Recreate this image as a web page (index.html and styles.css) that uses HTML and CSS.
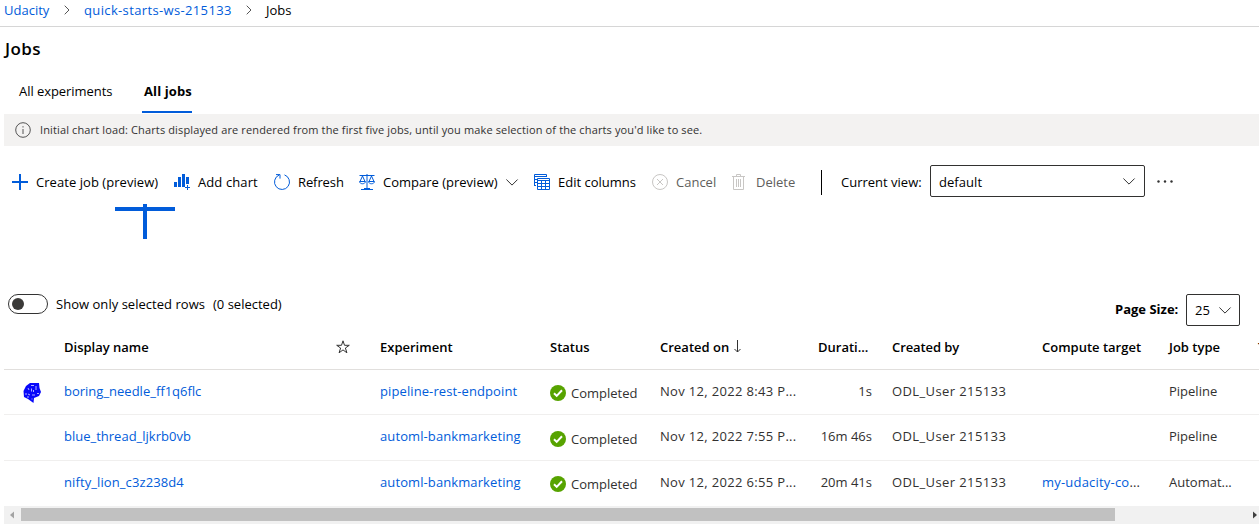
FILE: index.html
```html
<!DOCTYPE html>
<html lang="en">
<head>
<meta charset="utf-8">
<title>Jobs</title>
<link rel="stylesheet" href="styles.css">
</head>
<body>
<nav class="breadcrumb">
  <a class="bc-root">Udacity</a>
  <svg class="sep" width="6" height="10" viewBox="0 0 6 10"><path d="M.7.7 5 5 .7 9.300"/></svg>
  <a class="bc-ws">quick-starts-ws-215133</a>
  <svg class="sep" width="6" height="10" viewBox="0 0 6 10"><path d="M.7.7 5 5 .7 9.300"/></svg>
  <span class="bc-page">Jobs</span>
</nav>
<h1 class="title">Jobs</h1>
<div class="tabs"><span class="tab tab-exp">All experiments</span><span class="tab tab-jobs active">All jobs</span></div>
<div class="banner">
  <svg width="16" height="16" viewBox="0 0 16 16"><circle cx="8" cy="8" r="7.300"/><path d="M8 4.200v1.300M8 7v5"/></svg>
  <span class="banner-text">Initial chart load: Charts displayed are rendered from the first five jobs, until you make selection of the charts you'd like to see.</span>
</div>
<div class="toolbar">
  <div class="cmd c-create"><svg class="icon" viewBox="0 0 16 16"><path class="fill" d="M7 0h2v7h7v2H9v7H7V9H0V7h7z"/></svg><span>Create job (preview)</span></div>
  <div class="cmd c-add"><svg class="icon" viewBox="0 0 16 16"><path class="fill" d="M0 8h3v5H0zM4 3h3v10H4zM8 0h3v13H8zM12 3h3v7h-3zM13 11h1v2h2v1h-2v2h-1v-2h-2v-1h2z"/></svg><span>Add chart</span></div>
  <div class="cmd c-refresh"><svg class="icon" viewBox="0 0 16 16"><path class="line" d="M10.500.9a7.500 7.500 0 1 1-5.500.2M2 .6h4v4"/></svg><span>Refresh</span></div>
  <div class="cmd c-compare"><svg class="icon" viewBox="0 0 16 16"><path class="line" d="M.5 1.500h15M8 0v15M2 15.500h12M3.500 2 1 7.500M3.500 2 6 7.500M12.500 2 10 7.500M12.500 2 15 7.500M5 14.500h6"/><path class="line" d="M.6 7.500h5.800c0 3-5.800 3-5.800 0zM9.600 7.500h5.800c0 3-5.800 3-5.800 0z"/></svg><span>Compare (preview)</span><svg class="chevron" width="12" height="7" viewBox="0 0 12 7"><path d="m.4.5 5.600 5.600L11.600.5"/></svg></div>
  <div class="cmd c-edit"><svg class="icon" viewBox="0 0 16 16"><path class="line" d="M.5 11.500V.5h12V3M0 2.500h13M0 5.500h3M0 8.500h3M0 11.500h2M3.500 4.500h12v11h-12zM3.500 6.500h12M3.500 9.500h12M3.500 12.500h12M7.500 6v10M11.500 6v10"/></svg><span>Edit columns</span></div>
  <div class="cmd c-cancel off"><svg class="icon" viewBox="0 0 16 16"><circle class="line" cx="8" cy="8" r="7.500"/><path class="line" d="m5 5 6 6M11 5l-6 6"/></svg><span>Cancel</span></div>
  <div class="cmd c-delete off"><svg class="icon" viewBox="0 0 16 16"><path class="line" d="M0 2.500h13M4.500 2V.5h4V2M1.500 3v12.500h10V3M4.500 5v8M6.500 5v8M8.500 5v8"/></svg><span>Delete</span></div>
  <div class="divider"></div>
  <span class="view-label">Current view:</span>
  <div class="select view"><span>default</span><svg class="chevron" width="12" height="7" viewBox="0 0 12 7"><path d="m.4.5 5.600 5.600L11.600.5"/></svg></div>
  <svg class="more" width="16" height="3" viewBox="0 0 16 3"><circle cx="1.500" cy="1.500" r="1.200"/><circle cx="8" cy="1.500" r="1.200"/><circle cx="14.500" cy="1.500" r="1.200"/></svg>
</div>
<svg class="marker" width="60" height="35" viewBox="0 0 60 35"><path d="M0 3h28V0h4v3h28v4H32v28h-4V7H0z"/></svg>
<div class="options">
  <div class="toggle"><i></i></div>
  <span class="show-label">Show only selected rows</span><span class="count">(0 selected)</span>
  <div class="page-size"><b>Page Size:</b><div class="select size"><span>25</span><svg class="chevron" width="12" height="7" viewBox="0 0 12 7"><path d="m.4.5 5.600 5.600L11.600.5"/></svg></div></div>
</div>
<div class="table">
  <div class="row head">
    <span></span><span class="h-name">Display name</span>
    <svg class="star" width="14" height="14" viewBox="0 0 14 14"><path d="m7 .8 1.500 4.500h4.800L9.400 8l1.500 4.800L7 9.900l-3.900 2.900L4.600 8 .7 5.300h4.800z"/></svg>
    <span class="h-exp">Experiment</span><span class="h-status">Status</span>
    <span class="h-created"><span>Created on</span><svg width="8" height="13" viewBox="0 0 8 13"><path d="M4.500 0v12M1.500 9l3 3 3-3"/></svg></span>
    <span class="h-dur">Durati...</span><span class="h-by">Created by</span><span class="h-compute">Compute target</span><span class="h-type">Job type</span><span>T</span>
  </div>
  <div class="row r1">
    <svg class="scribble" width="19" height="22" viewBox="0 0 19 22"><path class="blob" d="M7 1h9l.5 5 1.500 4-2 4-5 2-.5 5L5 17l-4-2L.5 9 3 4z"/><path class="gap" d="M8 3.500h3M13 4v4M5 6l1 2M8.500 6.500v3M10.500 8v2M5 12l2 1M9 13h3M14 11.500h2M3 11v2M4 15h2M9 16.500v1"/></svg>
    <a class="n1">boring_needle_ff1q6flc</a><span></span><a class="e1">pipeline-rest-endpoint</a>
    <span class="status"><svg width="16" height="16" viewBox="0 0 16 16"><circle cx="8" cy="8" r="8"/><path d="m4 8.300 2.700 2.600L12 5.200"/></svg><span>Completed</span></span>
    <span class="date">Nov 12, 2022 8:43 P...</span><span class="dur">1s</span><span class="by">ODL_User 215133</span><span></span><span class="pipe">Pipeline</span><span></span>
  </div>
  <div class="row r2">
    <span></span><a class="n2">blue_thread_ljkrb0vb</a><span></span><a class="e2">automl-bankmarketing</a>
    <span class="status"><svg width="16" height="16" viewBox="0 0 16 16"><circle cx="8" cy="8" r="8"/><path d="m4 8.300 2.700 2.600L12 5.200"/></svg><span>Completed</span></span>
    <span class="date">Nov 12, 2022 7:55 P...</span><span class="dur">16m 46s</span><span class="by">ODL_User 215133</span><span></span><span class="pipe">Pipeline</span><span></span>
  </div>
  <div class="row r3">
    <span></span><a class="n3">nifty_lion_c3z238d4</a><span></span><a class="e2">automl-bankmarketing</a>
    <span class="status"><svg width="16" height="16" viewBox="0 0 16 16"><circle cx="8" cy="8" r="8"/><path d="m4 8.300 2.700 2.600L12 5.200"/></svg><span>Completed</span></span>
    <span class="date">Nov 12, 2022 6:55 P...</span><span class="dur">20m 41s</span><span class="by">ODL_User 215133</span><span class="compute"><a>my-udacity-co</a>...</span><span class="auto">Automat...</span><span></span>
  </div>
</div>
<div class="scrollbar">
  <svg width="17" height="18" viewBox="0 0 17 18"><path fill="#a3a3a3" d="M10 5.500v7L6 9z"/></svg>
  <div class="thumb"></div>
  <svg class="right" width="9" height="18" viewBox="0 0 9 18"><path fill="#404040" d="M3 5.500v7L7 9z"/></svg>
</div>
</body>
</html>
```
FILE: styles.css
```css
* { box-sizing: border-box; }
body { margin: 0; width: 1259px; height: 526px; overflow: hidden; background: #fff; color: #000; font: 13px/20px "Open Sans", "Noto Sans", sans-serif; white-space: nowrap; }
svg { display: block; flex: none; overflow: visible; fill: none; }
a { color: #015cda; }
.breadcrumb { display: flex; align-items: center; height: 27px; padding: 0 0 6px 4px; border-bottom: 1px solid #d6d6d6; }
.bc-root { width: 60px; }
.sep { width: 6px; margin-right: 14px; stroke: #555; }
.bc-ws { width: 162px; letter-spacing: .36px; }
.title { margin: 0; height: 44px; padding: 0 0 0 5px; font-size: 17px; line-height: 44px; font-weight: 600; letter-spacing: .4px; }
.tabs { display: flex; height: 43px; padding-left: 19px; gap: 30px; }
.tab { height: 42px; line-height: 41px; }
.tab-exp { width: 93px; letter-spacing: -.06px; }
.tab-jobs { width: 50px; padding-left: 2px; font-weight: 700; letter-spacing: .1px; border-bottom: 2px solid #015cda; }
.banner { display: flex; align-items: center; gap: 9px; height: 32px; margin-left: 4px; padding-left: 11px; background: #f3f2f1; color: #323130; font-size: 11px; letter-spacing: .13px; }
.banner svg { stroke: #555; }
.toolbar { display: flex; align-items: center; height: 58px; margin-top: 7px; padding-left: 12px; }
.cmd { display: flex; align-items: center; gap: 8px; height: 32px; }
.icon { width: 16px; height: 16px; }
.fill { fill: #015cda; }
.line { stroke: #015cda; }
.off { color: #605e5c; }
.off .line { stroke: #c8c6c4; }
.c-create { width: 162px; letter-spacing: .05px; }
.c-add { width: 100px; letter-spacing: .1px; }
.c-refresh { width: 85px; letter-spacing: -.1px; }
.c-compare { width: 175px; }
.c-edit { width: 118px; }
.c-cancel { width: 80px; }
.c-delete { width: 89px; }
.chevron { stroke: #333; }
.divider { width: 1px; height: 25px; margin-right: 19px; background: #000; }
.view-label { width: 89px; }
.select { display: flex; align-items: center; justify-content: space-between; height: 32px; border: 1px solid #323130; border-radius: 2px; padding: 0 9px 0 8px; }
.view { width: 215px; margin-bottom: 2px; padding-top: 1px; letter-spacing: .05px; }
.more { margin: 0 0 2px 12px; fill: #333; }
.marker { margin: -7px 0 0 115px; fill: #015cda; }
.options { display: flex; height: 87px; padding: 54px 0 0 8px; }
.toggle { width: 40px; height: 20px; margin-top: 1px; padding: 3px; border: 1px solid #333; border-radius: 10px; }
.toggle i { display: block; width: 12px; height: 12px; border-radius: 6px; background: #3b3a39; }
.show-label { width: 157px; margin-left: 8px; letter-spacing: .03px; }
.show-label, .count { padding-top: 1px; }
.page-size { display: flex; align-items: center; height: 32px; margin: 1px 19px 0 auto; }
.page-size b { width: 71px; padding-bottom: 2px; }
.size { width: 54px; padding-right: 8px; }
.table { margin-left: 4px; }
.row { display: grid; grid-template-columns: 60px 272px 44px 170px 110px 158px 54px 170px 127px 89px 20px; align-items: center; color: #323130; border-bottom: 1px solid #f0efee; }
.head { height: 44px; padding-bottom: 2px; color: #000; font-weight: 600; border-color: #e1dfdd; }
.star { stroke: #333; }
.h-created { display: flex; align-items: center; gap: 4px; }
.h-created svg { stroke: #333; }
.dur { text-align: right; }
.by, .h-by { padding-left: 20px; }
.h-by { letter-spacing: -.1px; }
.date { letter-spacing: .33px; }
.by { letter-spacing: .4px; }
.e1, .e2, .n3 { letter-spacing: .1px; }
.compute { letter-spacing: .2px; }
.r1 { height: 45px; padding-bottom: 2px; }
.r2 { height: 46px; padding-bottom: 4px; }
.r3 { height: 45px; padding-bottom: 4px; border: 0; }
.scribble { margin: 3px 0 0 19px; }
.blob { fill: #0808fa; }
.gap { stroke: #b0b0ff; }
.status { display: flex; align-items: center; gap: 5px; padding-top: 3px; }
.r2 .status { padding-top: 6px; }
.r3 .status { padding-top: 5px; }
.status circle { fill: #57a300; }
.status path { stroke: #fff; stroke-width: 2; }
.scrollbar { display: flex; align-items: center; height: 18px; margin-left: 4px; background: #f1f1f1; }
.thumb { width: 1094px; height: 13px; margin-bottom: 1px; background: #c1c1c1; }
.right { margin-left: auto; }
```
